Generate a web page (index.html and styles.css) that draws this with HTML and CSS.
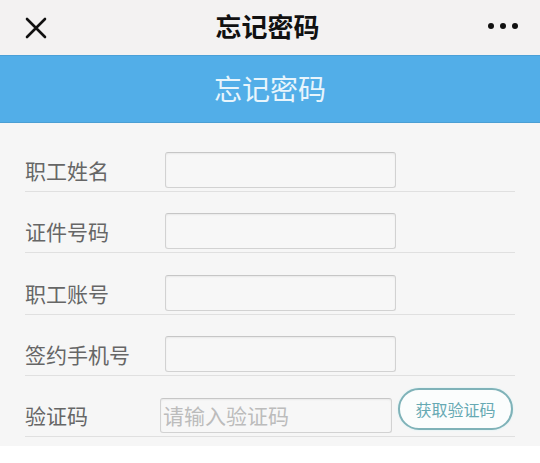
FILE: index.html
```html
<!DOCTYPE html>
<html lang="zh-CN">
<head>
<meta charset="utf-8">
<title>忘记密码</title>
<link rel="stylesheet" href="styles.css">
</head>
<body>
<div class="page">
  <header class="navbar">
    <span class="nav-close" aria-label="关闭">
      <svg width="22" height="22" viewBox="0 0 22 22"><path d="M2 2 L20 20 M20 2 L2 20" stroke="#111" stroke-width="2.6" stroke-linecap="round" fill="none"/></svg>
    </span>
    <h1 class="nav-title">忘记密码</h1>
    <span class="nav-more" aria-label="更多">
      <i class="dot"></i><i class="dot"></i><i class="dot"></i>
    </span>
  </header>
  <div class="banner">忘记密码</div>
  <form class="form">
    <div class="row">
      <label class="label">职工姓名</label>
      <input class="field" type="text">
    </div>
    <div class="row">
      <label class="label">证件号码</label>
      <input class="field" type="text">
    </div>
    <div class="row">
      <label class="label">职工账号</label>
      <input class="field" type="text">
    </div>
    <div class="row">
      <label class="label">签约手机号</label>
      <input class="field" type="text">
    </div>
    <div class="row row-code">
      <label class="label">验证码</label>
      <input class="field field-code" type="text" placeholder="请输入验证码">
      <button class="code-btn" type="button">获取验证码</button>
    </div>
  </form>
  <div class="footer-space"></div>
</div>
</body>
</html>
```

FILE: styles.css
```css
* { box-sizing: border-box; }
html, body { margin: 0; padding: 0; background: #ffffff; }
body {
  font-family: "Noto Sans CJK SC", "Noto Sans", "Liberation Sans", sans-serif;
  width: 540px;
  height: 463px;
  overflow: hidden;
}
.page { display: flex; flex-direction: column; }

.navbar {
  height: 55px;
  background: #f3f2f2;
  display: flex;
  align-items: center;
  justify-content: space-between;
  padding: 0 22px 0 25px;
}
.nav-close { width: 22px; height: 22px; display: flex; margin-top: 1px; }
.nav-title {
  margin: 0;
  font-size: 26px;
  font-weight: 700;
  color: #111;
  line-height: 1;
  margin-top: -3px;
}
.nav-more { display: flex; gap: 6px; align-items: center; margin-top: -4px; }
.dot { display: block; width: 6px; height: 6px; border-radius: 50%; background: #111; }

.banner {
  height: 68px;
  background: #52aee8;
  border-top: 1px solid #4aa0d8;
  border-bottom: 1px solid #4b9fd4;
  box-shadow: 0 1px 0 #e4f6fb;
  color: #e8f5fc;
  font-size: 28px;
  display: flex;
  align-items: center;
  justify-content: center;
  padding-bottom: 2px;
}

.form {
  background: #f6f6f6;
  padding: 7px 25px 9px;
  margin: 0;
}
.row {
  display: grid;
  grid-template-columns: 140px 231px;
  align-items: center;
  padding: 21.5px 0 3px;
  border-bottom: 1px solid #e0e0e0;
}
.label {
  font-size: 21px;
  color: #666;
  line-height: 1;
  margin-top: 1px;
}
.field {
  height: 36px;
  width: 100%;
  border: 1px solid #d2d2d2;
  border-top-color: #c6c6c6;
  border-radius: 3px;
  background: #f7f7f7;
  box-shadow: inset 0 1px 2px rgba(0, 0, 0, 0.06);
  font-family: inherit;
  font-size: 21px;
  padding: 0 2px;
  outline: none;
}
.field::placeholder { color: #bcbcbc; }

.row-code { grid-template-columns: 135px 232px 115px; column-gap: 0; }
.field-code { height: 35px; }
.code-btn {
  margin-left: 6px;
  height: 42px;
  width: 115px;
  align-self: start;
  margin-top: -10px;
  border: 2px solid #7fb2b8;
  border-radius: 21px;
  background: #fbfdfd;
  box-shadow: 0 0 2px #cdeef2;
  color: #66a9b3;
  font-family: inherit;
  font-size: 16px;
  padding: 0;
}

.footer-space { flex: 1; background: #fff; }
```
